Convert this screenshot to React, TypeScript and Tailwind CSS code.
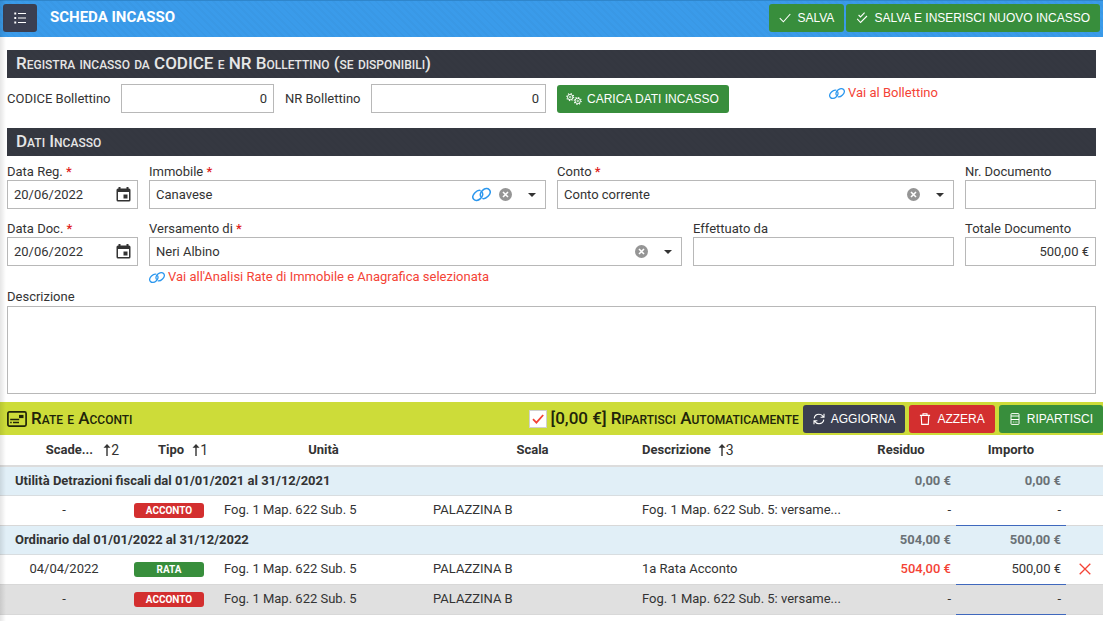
import React from 'react';

type Row =
  | { kind: 'group'; id: number; title: string; residuo: string; importo: string }
  | {
      kind: 'rata';
      id: number;
      scadenza: string;
      tipo: 'ACCONTO' | 'RATA';
      unita: string;
      scala: string;
      descrizione: string;
      residuo: string;
      importo: string;
      selected?: boolean;
    };

const rows: Row[] = [
  {
    kind: 'group',
    id: 1,
    title: 'Utilità Detrazioni fiscali dal 01/01/2021 al 31/12/2021',
    residuo: '0,00 €',
    importo: '0,00 €',
  },
  {
    kind: 'rata',
    id: 2,
    scadenza: '-',
    tipo: 'ACCONTO',
    unita: 'Fog. 1 Map. 622 Sub. 5',
    scala: 'PALAZZINA B',
    descrizione: 'Fog. 1 Map. 622 Sub. 5: versame...',
    residuo: '-',
    importo: '-',
  },
  {
    kind: 'group',
    id: 3,
    title: 'Ordinario dal 01/01/2022 al 31/12/2022',
    residuo: '504,00 €',
    importo: '500,00 €',
  },
  {
    kind: 'rata',
    id: 4,
    scadenza: '04/04/2022',
    tipo: 'RATA',
    unita: 'Fog. 1 Map. 622 Sub. 5',
    scala: 'PALAZZINA B',
    descrizione: '1a Rata Acconto',
    residuo: '504,00 €',
    importo: '500,00 €',
  },
  {
    kind: 'rata',
    id: 5,
    scadenza: '-',
    tipo: 'ACCONTO',
    unita: 'Fog. 1 Map. 622 Sub. 5',
    scala: 'PALAZZINA B',
    descrizione: 'Fog. 1 Map. 622 Sub. 5: versame...',
    residuo: '-',
    importo: '-',
    selected: true,
  },
];

const boxClass =
  'block w-full min-w-0 rounded-none border border-[#b8b8b8] bg-white px-[6px] text-[#333] outline-none focus:border-[#3898e8]';

/* ---------- Icons ---------- */

const ListIcon = () => (
  <svg className="h-3 w-3" viewBox="0 0 12 12" fill="none" stroke="currentColor">
    <path d="M4 1.5h8M4 6h8M4 10.5h8" />
    <path d="M.3 1.5h1.9M.3 6h1.9M.3 10.5h1.9" strokeWidth="1.9" />
  </svg>
);

const CheckIcon = () => (
  <svg className="h-3 w-3" viewBox="0 0 12 12" fill="none" stroke="currentColor" strokeWidth="1.1">
    <path d="M.8 6.200l3.600 3.600L11.300 2" />
  </svg>
);

const DoubleCheckIcon = () => (
  <svg className="h-3 w-3" viewBox="0 0 12 12" fill="none" stroke="currentColor" strokeWidth="1.1">
    <path d="M2.600 3l1.900 1.900L8.600.7" />
    <path d="M1.200 6.800l3.400 3.700L11 4" />
  </svg>
);

const GearsIcon = () => (
  <svg className="-mx-px h-3 w-4" viewBox="0 0 16 12" fill="none" stroke="currentColor">
    <circle cx="4.200" cy="4.100" r="2.700" strokeWidth="1" />
    <circle cx="4.200" cy="4.100" r="3.500" strokeWidth="1.100" strokeDasharray="1.200 1.550" />
    <circle cx="4.200" cy="4.100" r=".8" strokeWidth=".8" />
    <circle cx="11.700" cy="7.900" r="2.700" strokeWidth="1" />
    <circle cx="11.700" cy="7.900" r="3.500" strokeWidth="1.100" strokeDasharray="1.200 1.550" />
    <circle cx="11.700" cy="7.900" r=".8" strokeWidth=".8" />
  </svg>
);

const LinkIcon = ({ className = 'h-[13px] w-4' }: { className?: string }) => (
  <svg className={className} viewBox="0 0 18 14" fill="none" stroke="#2b97ee" strokeWidth="1.400">
    <path d="M8.200 3.300C6.400 2.600 4.500 3.600 2.800 5.300.8 7.300.2 9.900 1.600 11.500s4.200 1.500 6.400-.6c2.200-2 2.900-4.600 1.300-6.300" />
    <path d="M9.800 10.700c1.800.7 3.700-.3 5.400-2 2-2 2.600-4.600 1.200-6.200s-4.200-1.500-6.400.6c-2.200 2-2.900 4.600-1.300 6.300" />
  </svg>
);

const CalendarIcon = () => (
  <svg className="h-[15px] w-[15px]" viewBox="0 0 15 15" fill="#333">
    <path fillRule="evenodd" d="M2.500 0h2v1.500h6V0h2v1.500H13A1.500 1.500 0 0 1 14.500 3v10a1.500 1.500 0 0 1-1.500 1.500H2A1.500 1.500 0 0 1 .5 13V3A1.500 1.500 0 0 1 2 1.500h.5zM2 5v8h11V5z" />
    <path d="M7.500 7.500h4v4h-4z" />
  </svg>
);

const ClearIcon = () => (
  <svg className="h-[13px] w-[13px]" viewBox="0 0 13 13">
    <circle cx="6.500" cy="6.500" r="6.500" fill="#959595" />
    <path d="M4 4l5 5M9 4l-5 5" stroke="#fff" strokeWidth="1.600" />
  </svg>
);

const CaretIcon = () => (
  <svg className="h-1 w-2" viewBox="0 0 8 4" fill="#333">
    <path d="M0 0h8L4 4z" />
  </svg>
);

const CardIcon = () => (
  <svg className="h-4 w-5" viewBox="0 0 20 16" fill="none" stroke="#20240a">
    <rect x=".9" y=".9" width="18.200" height="14.200" rx="1.500" strokeWidth="1.700" />
    <path d="M12 5.500h4.500" strokeWidth="3.200" />
    <path d="M3.200 8.500h9M3.200 11.500h1.500M6 11.500h6" strokeWidth="1.500" />
  </svg>
);

const RefreshIcon = () => (
  <svg className="h-3 w-3" viewBox="0 0 12 12" fill="none" stroke="currentColor" strokeWidth="1.100">
    <path d="M1.200 5.300C1.600 2.800 3.600 1.300 6 1.300c1.900 0 3.300.9 4.500 2.600M11 .8v3.400H7.600" />
    <path d="M10.800 6.700c-.4 2.500-2.400 4-4.800 4-1.900 0-3.300-.9-4.500-2.600M1 11.200V7.800h3.400" />
  </svg>
);

const TrashIcon = () => (
  <svg className="h-3 w-3" viewBox="0 0 12 12" fill="none" stroke="currentColor" strokeWidth="1.100">
    <path d="M.9 2.400h10.200M4 2.400V.7h4v1.700M2.200 2.400l.5 9h6.600l.5-9" />
  </svg>
);

const CalculatorIcon = () => (
  <svg className="h-3 w-3" viewBox="0 0 12 12" fill="none" stroke="currentColor">
    <rect x="2" y=".6" width="8" height="10.800" rx=".6" />
    <path d="M2 3h8M2 6.500h8" />
    <path d="M3.800 9h1M5.600 9h1M7.400 9h1" />
  </svg>
);

const SortIcon = () => (
  <svg className="h-3 w-2" viewBox="0 0 8 12" fill="#333">
    <path d="M4 0l3.500 3.800H4.700V12H3.300V3.800H.5z" />
  </svg>
);

/* ---------- Building blocks ---------- */

const texture =
  'bg-[repeating-linear-gradient(45deg,rgba(0,0,0,0.02)_0px,rgba(0,0,0,0.02)_2px,transparent_2px,transparent_5px)]';

// Lowercase runs become smaller capitals
const SmallCaps: React.FC<{ text: string }> = ({ text }) => (
  <span className="whitespace-pre">
    {text.split(/([a-z]+)/).map((part, i) =>
      /^[a-z]/.test(part) ? (
        <span key={i} className="text-[12px] uppercase">
          {part}
        </span>
      ) : (
        part
      ),
    )}
  </span>
);

const Button: React.FC<{
  icon: React.ReactNode;
  label: string;
  className?: string;
}> = ({ icon, label, className = 'bg-[#388e3c]' }) => (
  <button
    type="button"
    className={`flex h-7 shrink-0 items-center gap-[6px] whitespace-nowrap rounded-[3px] px-[10px] font-['Liberation_Sans',Arial,sans-serif] text-[12px] text-white ${className}`}
  >
    {icon}
    {label}
  </button>
);

const SectionTitle: React.FC<{ text: string }> = ({ text }) => (
  <h2
    className={`h-7 bg-[#353841] px-[9px] text-[17px] leading-[27px] font-medium text-[#e6e6e6] ${texture}`}
  >
    <SmallCaps text={text} />
  </h2>
);

const Label: React.FC<{ htmlFor: string; text: string; required?: boolean }> = ({
  htmlFor,
  text,
  required,
}) => (
  <label htmlFor={htmlFor} className="block min-w-0 leading-[17px] whitespace-nowrap">
    {text}
    {required && <span className="font-medium text-[#e02020]"> *</span>}
  </label>
);

const DateField: React.FC<{ id: string; label: string; value: string }> = ({
  id,
  label,
  value,
}) => (
  <div>
    <Label htmlFor={id} text={label} required />
    <div className="relative">
      <input id={id} type="text" defaultValue={value} className={`${boxClass} h-[29px]`} />
      <button
        type="button"
        aria-label="Apri calendario"
        className="absolute inset-y-0 right-[7px] flex items-center"
      >
        <CalendarIcon />
      </button>
    </div>
  </div>
);

const SelectField: React.FC<{
  id: string;
  label: string;
  value: string;
  withLink?: boolean;
}> = ({ id, label, value, withLink }) => (
  <div>
    <Label htmlFor={id} text={label} required />
    <div className="relative">
      <select id={id} className={`${boxClass} h-[29px] appearance-none`}>
        <option>{value}</option>
      </select>
      <div className="pointer-events-none absolute inset-y-0 right-[10px] flex items-center">
        {withLink && (
          <a href="#immobile" aria-label="Vai all'immobile" className="pointer-events-auto mr-2">
            <LinkIcon className="h-[15px] w-[19px]" />
          </a>
        )}
        <button type="button" aria-label="Cancella" className="pointer-events-auto mr-4">
          <ClearIcon />
        </button>
        <CaretIcon />
      </div>
    </div>
  </div>
);

const TextField: React.FC<{ id: string; label: string; value?: string }> = ({
  id,
  label,
  value = '',
}) => (
  <div>
    <Label htmlFor={id} text={label} />
    <input
      id={id}
      type="text"
      defaultValue={value}
      className={`${boxClass} h-[29px] text-right`}
    />
  </div>
);

const SortHeader: React.FC<{ label: string; order: number; className: string }> = ({
  label,
  order,
  className,
}) => (
  <button type="button" className={`flex w-full items-center font-bold ${className}`}>
    {label}
    <span className="flex items-center text-[14px] font-normal">
      <SortIcon />
      {order}
    </span>
  </button>
);

/* ---------- Table ---------- */

const RateTable: React.FC = () => (
  <table className="w-full table-fixed border-collapse">
    <colgroup>
      <col className="w-[9px]" />
      <col className="w-[110px]" />
      <col className="w-[100px]" />
      <col />
      <col />
      <col />
      <col className="w-[110px]" />
      <col className="w-[110px]" />
      <col className="w-[37px]" />
    </colgroup>
    <thead>
      <tr className="h-[31px] border-b-2 border-[#dcdcdc]">
        <td />
        <th scope="col">
          <SortHeader label="Scade..." order={2} className="justify-end gap-[10px]" />
        </th>
        <th scope="col">
          <SortHeader label="Tipo" order={1} className="justify-end gap-[8px] pr-[11px]" />
        </th>
        <th scope="col">Unità</th>
        <th scope="col">Scala</th>
        <th scope="col">
          <SortHeader label="Descrizione" order={3} className="gap-[7px] pl-[5px]" />
        </th>
        <th scope="col">Residuo</th>
        <th scope="col">Importo</th>
        <td />
      </tr>
    </thead>
    <tbody>
      {rows.map((row) =>
        row.kind === 'group' ? (
          <tr key={row.id} className="h-[29px] border-b border-[#d8dde0] bg-[#e1eff7] font-bold">
            <td />
            <td colSpan={5} className="px-[6px]">
              {row.title}
            </td>
            <td className="px-[5px] text-right text-[#6a7176]">{row.residuo}</td>
            <td className="px-[5px] text-right text-[#6a7176]">{row.importo}</td>
            <td />
          </tr>
        ) : (
          <tr
            key={row.id}
            className={`h-[30px] border-b border-[#d8d8d8] ${row.selected ? 'bg-[#e0e0e0]' : 'bg-white'}`}
          >
            <td />
            <td className="text-center">{row.scadenza}</td>
            <td className="px-[15px]">
              <span
                className={`block h-[15px] rounded-[3px] text-center text-[10px] leading-[15px] font-bold text-white ${
                  row.tipo === 'RATA' ? 'bg-[#388e3c]' : 'bg-[#d32f2f]'
                }`}
              >
                {row.tipo}
              </span>
            </td>
            <td className="truncate px-[5px]">{row.unita}</td>
            <td className="truncate px-[5px]">{row.scala}</td>
            <td className="truncate px-[5px]">{row.descrizione}</td>
            <td
              className={`px-[5px] text-right ${row.residuo === '-' ? '' : 'font-medium text-[#f44336]'}`}
            >
              {row.residuo}
            </td>
            <td className="border-b border-b-[#3f68bd] px-[5px] text-right">{row.importo}</td>
            <td>
              {row.importo !== '-' && (
                <button type="button" aria-label="Rimuovi importo" className="mx-auto block">
                  <svg className="h-3 w-3" viewBox="0 0 12 12" stroke="#f44336" strokeWidth="1.300">
                    <path d="M.7.7l10.600 10.600M11.300.7L.7 11.300" />
                  </svg>
                </button>
              )}
            </td>
          </tr>
        ),
      )}
    </tbody>
  </table>
);

const App: React.FC = () => {
  return (
    <div className="relative min-h-screen bg-white font-[Roboto,sans-serif] text-[13px] leading-[18px] text-[#333]">
      {/* Top bar */}
      <header
        className={`flex h-[37px] items-center border-t border-[#2f86cc] bg-[#3a9bea] px-[3px] pb-[2px] ${texture}`}
      >
        <button
          type="button"
          aria-label="Menu"
          className="flex h-7 w-[34px] items-center justify-center rounded-[3px] bg-[#3b3f51] text-white"
        >
          <ListIcon />
        </button>
        <h1 className="flex-1 px-[13px] pb-[2px] text-[15px] font-bold text-white">
          SCHEDA INCASSO
        </h1>
        <div className="flex gap-[2px]">
          <Button icon={<CheckIcon />} label="SALVA" />
          <Button icon={<DoubleCheckIcon />} label="SALVA E INSERISCI NUOVO INCASSO" />
        </div>
      </header>

      <form className="px-[7px] pt-[13px]" onSubmit={(e) => e.preventDefault()}>
        <SectionTitle text="Registra incasso da CODICE e NR Bollettino (se disponibili)" />
        <div className="grid grid-cols-[103fr_153fr_75fr_175fr_261fr_267fr] items-center gap-x-[11px] pt-[6px] pb-[15px]">
          <Label htmlFor="codice" text="CODICE Bollettino" />
          <input id="codice" type="text" defaultValue="0" className={`${boxClass} h-[29px] text-right`} />
          <Label htmlFor="numero" text="NR Bollettino" />
          <input id="numero" type="text" defaultValue="0" className={`${boxClass} h-[29px] text-right`} />
          <div className="flex">
            <Button icon={<GearsIcon />} label="CARICA DATI INCASSO" />
          </div>
          <a href="#bollettino" className="flex items-center gap-[3px] self-start text-[#f44336]">
            <LinkIcon />
            Vai al Bollettino
          </a>
        </div>

        <SectionTitle text="Dati Incasso" />
        <div className="grid grid-cols-[131fr_397fr_397fr_131fr] gap-x-[11px] pt-[7px]">
          <DateField id="data-reg" label="Data Reg." value="20/06/2022" />
          <SelectField id="immobile" label="Immobile" value="Canavese" withLink />
          <SelectField id="conto" label="Conto" value="Conto corrente" />
          <TextField id="nr-doc" label="Nr. Documento" />
        </div>
        <div className="grid grid-cols-[131fr_533fr_261fr_131fr] gap-x-[11px] pt-[11px]">
          <DateField id="data-doc" label="Data Doc." value="20/06/2022" />
          <div>
            <SelectField id="versamento" label="Versamento di" value="Neri Albino" />
            <a href="#analisi" className="flex items-center gap-[3px] pt-[2px] text-[#f44336]">
              <LinkIcon />
              Vai all'Analisi Rate di Immobile e Anagrafica selezionata
            </a>
          </div>
          <TextField id="effettuato" label="Effettuato da" />
          <TextField id="totale" label="Totale Documento" value="500,00 €" />
        </div>
        <div className="flex flex-col gap-px pt-[2px] pb-2">
          <Label htmlFor="descrizione" text="Descrizione" />
          <textarea id="descrizione" className={`${boxClass} h-[88px] resize-none`} />
        </div>
      </form>

      {/* Installments toolbar */}
      <div className="flex h-[33px] items-center gap-1 bg-[#cddc39] pl-[7px] text-[#20240a]">
        <h2 className="flex flex-1 items-center gap-1 text-[17px] font-medium">
          <CardIcon />
          <SmallCaps text="Rate e Acconti" />
        </h2>
        <label className="flex items-center gap-1 text-[17px] font-medium">
          <span className="relative flex">
            <input
              type="checkbox"
              defaultChecked
              className="peer h-[18px] w-[18px] appearance-none border border-[#d0d0d0] bg-white"
            />
            <svg
              className="pointer-events-none absolute inset-0 hidden h-[18px] w-[18px] peer-checked:block"
              viewBox="0 0 18 18"
              fill="none"
              stroke="#f44336"
              strokeWidth="1.800"
            >
              <path d="M4 9.200l3.400 3.400L14.200 5" />
            </svg>
          </span>
          <SmallCaps text="[0,00 €] Ripartisci Automaticamente" />
        </label>
        <Button icon={<RefreshIcon />} label="AGGIORNA" className="bg-[#3b3f51]" />
        <Button icon={<TrashIcon />} label="AZZERA" className="bg-[#d32f2f]" />
        <Button icon={<CalculatorIcon />} label="RIPARTISCI" />
      </div>

      <RateTable />

      <div className="pointer-events-none absolute inset-y-0 left-0 w-[6px] bg-linear-to-r from-black/10 to-transparent" />
    </div>
  );
};

export default App;
